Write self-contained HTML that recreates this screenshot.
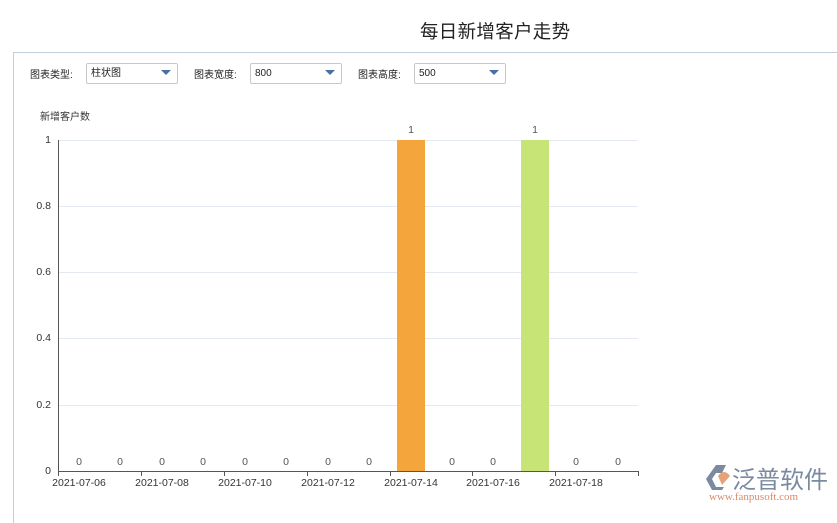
<!DOCTYPE html>
<html><head><meta charset="utf-8"><style>
body{margin:0;width:837px;height:510px;background:#fff;font-family:"Liberation Sans","Noto Sans CJK SC",sans-serif;position:relative;overflow:hidden}
.t{position:absolute;left:420px;top:18px;font-size:18.5px;color:#222;letter-spacing:0.3px}
.panel{position:absolute;left:13px;top:52px;width:830px;height:470px;border-top:1px solid #c0cedf;border-left:1px solid #c0cedf}
.lb{position:absolute;top:66px;font-size:10px;color:#222}
.sel{position:absolute;top:63px;height:21px;width:90px;border:1px solid #c8c8c8;border-radius:2px;font-size:10px;line-height:20px;padding-left:4px;box-sizing:border-box;color:#222}
.sel:after{content:"";position:absolute;right:6px;top:6px;border-left:5px solid transparent;border-right:5px solid transparent;border-top:5px solid #4a6fa5}
</style></head><body>
<div class="t">每日新增客户走势</div>
<div class="panel"></div>
<div class="lb" style="left:30px">图表类型:</div>
<div class="sel" style="left:86px;width:92px">柱状图</div>
<div class="lb" style="left:194px">图表宽度:</div>
<div class="sel" style="left:250px;width:92px">800</div>
<div class="lb" style="left:358px">图表高度:</div>
<div class="sel" style="left:414px;width:92px">500</div>
<svg style="position:absolute;left:0;top:0" width="837" height="510" font-family="Liberation Sans, Noto Sans CJK SC, sans-serif" font-size="10.5" fill="#333">
<text x="40" y="120" font-size="10">新增客户数</text>
<g stroke="#e4e8f0" stroke-width="1">
<line x1="58" y1="140.5" x2="638" y2="140.5"/><line x1="58" y1="206.5" x2="638" y2="206.5"/><line x1="58" y1="272.5" x2="638" y2="272.5"/><line x1="58" y1="338.5" x2="638" y2="338.5"/><line x1="58" y1="405.5" x2="638" y2="405.5"/>
</g>
<g text-anchor="end"><text x="51" y="143">1</text><text x="51" y="209">0.8</text><text x="51" y="275">0.6</text><text x="51" y="341">0.4</text><text x="51" y="408">0.2</text><text x="51" y="474">0</text></g>
<rect x="397" y="140" width="28" height="331" fill="#f4a53c"/>
<rect x="521" y="140" width="28" height="331" fill="#c7e576"/>
<line x1="58.5" y1="140" x2="58.5" y2="472" stroke="#555"/>
<line x1="58" y1="471.5" x2="638" y2="471.5" stroke="#555"/>
<g stroke="#555"><line x1="58.5" y1="471" x2="58.5" y2="476"/><line x1="141.5" y1="471" x2="141.5" y2="476"/><line x1="224.5" y1="471" x2="224.5" y2="476"/><line x1="307.5" y1="471" x2="307.5" y2="476"/><line x1="390.5" y1="471" x2="390.5" y2="476"/><line x1="472.5" y1="471" x2="472.5" y2="476"/><line x1="555.5" y1="471" x2="555.5" y2="476"/><line x1="638.5" y1="471" x2="638.5" y2="476"/></g>
<g text-anchor="middle" fill="#555">
<text x="79" y="465">0</text><text x="120" y="465">0</text><text x="162" y="465">0</text><text x="203" y="465">0</text><text x="245" y="465">0</text><text x="286" y="465">0</text><text x="328" y="465">0</text><text x="369" y="465">0</text><text x="411" y="133">1</text><text x="452" y="465">0</text><text x="493" y="465">0</text><text x="535" y="133">1</text><text x="576" y="465">0</text><text x="618" y="465">0</text>
</g>
<g text-anchor="middle" fill="#333">
<text x="79" y="486">2021-07-06</text><text x="162" y="486">2021-07-08</text><text x="245" y="486">2021-07-10</text><text x="328" y="486">2021-07-12</text><text x="411" y="486">2021-07-14</text><text x="493" y="486">2021-07-16</text><text x="576" y="486">2021-07-18</text>
</g>
<path d="M716 465 L726 465 L722 473 L716 473 L712 479 L716 487 L724 487 L722 490 L712 490 L706 479 Z" fill="#7a8aa0"/>
<path d="M718 476 Q724 468 730 476 L722 485 Z" fill="#e8a27a"/>
<text x="732" y="488" font-size="24" fill="#7a8aa0">泛普软件</text>
<text x="709" y="500" font-size="11" fill="#d98a6a" font-family="Liberation Serif, serif">www.fanpusoft.com</text>
</svg>
</body></html>
